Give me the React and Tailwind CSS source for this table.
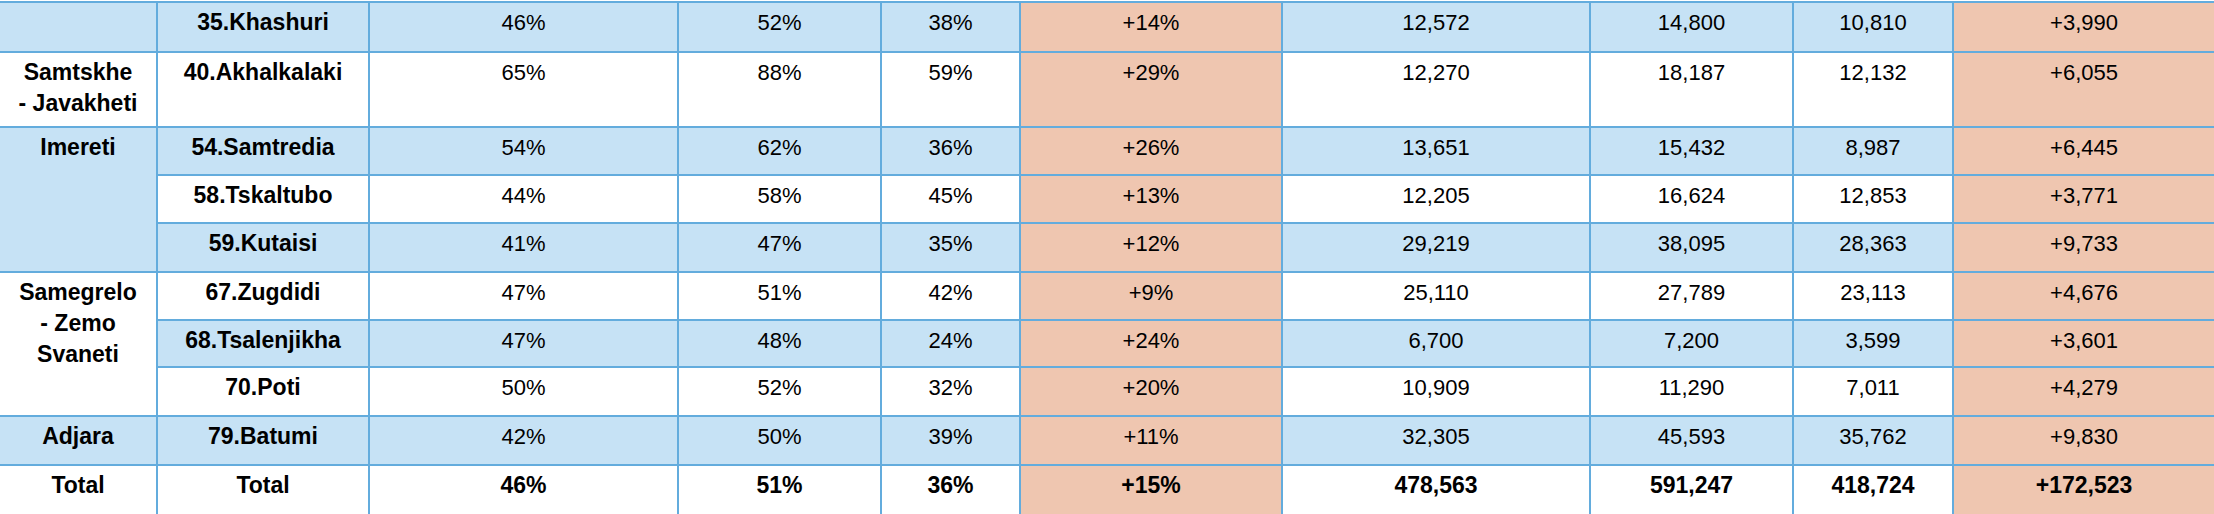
import React from "react";

const rows = [
  { region: "", regionRows: 1, regionBlue: true, name: "35.Khashuri", blue: true, h: "h-[52px]", v: ["46%", "52%", "38%", "+14%", "12,572", "14,800", "10,810", "+3,990"] },
  { region: ["Samtskhe", "- Javakheti"], regionRows: 1, regionBlue: false, name: "40.Akhalkalaki", blue: false, h: "h-[75px]", v: ["65%", "88%", "59%", "+29%", "12,270", "18,187", "12,132", "+6,055"] },
  { region: ["Imereti"], regionRows: 3, regionBlue: true, name: "54.Samtredia", blue: true, h: "h-[48px]", v: ["54%", "62%", "36%", "+26%", "13,651", "15,432", "8,987", "+6,445"] },
  { name: "58.Tskaltubo", blue: false, h: "h-[48px]", v: ["44%", "58%", "45%", "+13%", "12,205", "16,624", "12,853", "+3,771"] },
  { name: "59.Kutaisi", blue: true, h: "h-[49px]", v: ["41%", "47%", "35%", "+12%", "29,219", "38,095", "28,363", "+9,733"] },
  { region: ["Samegrelo", "- Zemo", "Svaneti"], regionRows: 3, regionBlue: false, name: "67.Zugdidi", blue: false, h: "h-[48px]", v: ["47%", "51%", "42%", "+9%", "25,110", "27,789", "23,113", "+4,676"] },
  { name: "68.Tsalenjikha", blue: true, h: "h-[47px]", v: ["47%", "48%", "24%", "+24%", "6,700", "7,200", "3,599", "+3,601"] },
  { name: "70.Poti", blue: false, h: "h-[49px]", v: ["50%", "52%", "32%", "+20%", "10,909", "11,290", "7,011", "+4,279"] },
  { region: ["Adjara"], regionRows: 1, regionBlue: true, name: "79.Batumi", blue: true, h: "h-[49px]", v: ["42%", "50%", "39%", "+11%", "32,305", "45,593", "35,762", "+9,830"] },
  { region: ["Total"], regionRows: 1, regionBlue: false, name: "Total", blue: false, h: "h-[50px]", total: true, v: ["46%", "51%", "36%", "+15%", "478,563", "591,247", "418,724", "+172,523"] },
];

const widths = [158, 212, 309, 203, 139, 262, 308, 203, 160, 260];

const cell = "border-b-2 border-[#63acdd] align-top text-center pt-[4px] leading-[31px]";

export default function App() {
  return (
    <div className="w-[2214px] h-[514px] overflow-hidden bg-white pt-px">
      <table
        className="table-fixed border-separate border-spacing-0 w-[2214px] text-[22px] text-black"
        style={{ fontFamily: '"Liberation Sans", Arial, sans-serif' }}
      >
        <colgroup>
          {widths.map((w, i) => (
            <col key={i} style={{ width: w }} />
          ))}
        </colgroup>
        <tbody>
          {rows.map((r, i) => {
            const top = i === 0 ? "border-t-2" : "";
            const bg = r.blue ? "bg-[#c6e2f5]" : "bg-white";
            return (
              <tr key={i}>
                {r.region !== undefined && (
                  <td
                    rowSpan={r.regionRows}
                    className={`${cell} ${top} ${r.h} border-r-2 font-bold text-[23px] ${r.regionBlue ? "bg-[#c6e2f5]" : "bg-white"}`}
                  >
                    {(r.region || []).map((line, k) => (
                      <div key={k}>{line}</div>
                    ))}
                  </td>
                )}
                <td className={`${cell} ${top} ${r.h} border-r-2 font-bold text-[23px] ${bg}`}>{r.name}</td>
                {r.v.map((val, k) => {
                  const pink = k === 3 || k === 7;
                  return (
                    <td
                      key={k}
                      className={`${cell} ${top} ${r.h} ${k === 7 ? "" : "border-r-2"} ${r.total ? "font-bold text-[23px]" : ""} ${pink ? "bg-[#efc6b0]" : bg}`}
                    >
                      {val}
                    </td>
                  );
                })}
              </tr>
            );
          })}
        </tbody>
      </table>
    </div>
  );
}
